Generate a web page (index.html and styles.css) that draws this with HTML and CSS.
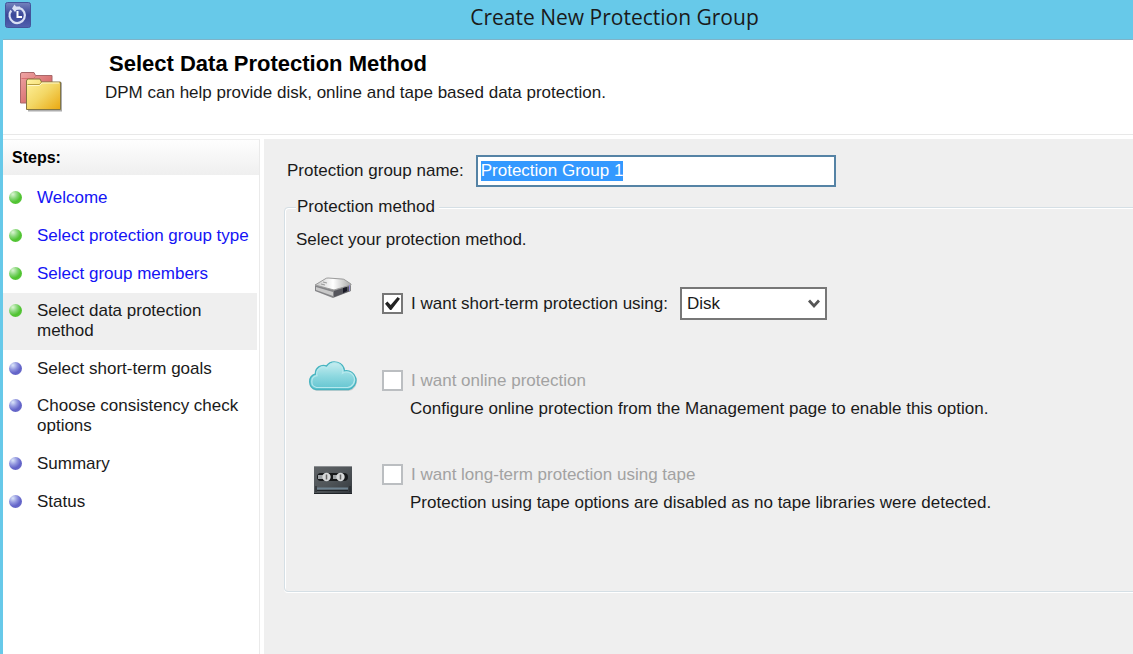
FILE: index.html
```html
<!DOCTYPE html>
<html lang="en">
<head>
  <meta charset="UTF-8">
  <meta name="viewport" content="width=device-width, initial-scale=1.0">
  <title>Create New Protection Group</title>
  <link rel="stylesheet" href="styles.css">
</head>
<body>
  <div class="titlebar">
    <svg class="app-icon" width="26" height="26" viewBox="0 0 26 26">
      <defs>
        <linearGradient id="app-bg" x1="0" y1="0" x2="0" y2="1">
          <stop offset="0" stop-color="#7583bd"></stop>
          <stop offset="0.5" stop-color="#3a4798"></stop>
          <stop offset="1" stop-color="#5262b0"></stop>
        </linearGradient>
      </defs>
      <rect x="0.5" y="0.5" width="25" height="25" rx="2" fill="url(#app-bg)" stroke="#44549b"></rect>
      <path d="M6.200 8.500a7.700 7.700 0 1 0 8-2.600" fill="none" stroke="#d9e0f5" stroke-width="2.200"></path>
      <path d="M7 6.500l2.500-4 1.500 2h4v3l-3.500.5-1.500 2z" fill="#d9e0f5"></path>
      <path d="M12.500 9v6H17" fill="none" stroke="#fff" stroke-width="2"></path>
    </svg>
    <div class="titlebar-text">Create New Protection Group</div>
  </div>

  <div class="window">
    <div class="header">
      <svg class="header-icon" width="44" height="42" viewBox="0 0 44 42">
        <defs>
          <linearGradient id="folder-red" x1="0" y1="0" x2="1" y2="1">
            <stop offset="0" stop-color="#f0a5a5"></stop>
            <stop offset="1" stop-color="#c9504f"></stop>
          </linearGradient>
          <linearGradient id="folder-yellow" x1="0" y1="0" x2="1" y2="1">
            <stop offset="0" stop-color="#fff3a0"></stop>
            <stop offset="0.5" stop-color="#f3d765"></stop>
            <stop offset="1" stop-color="#eaa810"></stop>
          </linearGradient>
        </defs>
        <path d="M1.500 32V3q0-1.500 1.500-1.500h12l1.500 3H33v27.500z" fill="url(#folder-red)" stroke="#a8686a"></path>
        <path d="M2.500 7.500h12l2-2" fill="none" stroke="#d96e70"></path>
        <path d="M9 39.500h33v-28" fill="none" stroke="#777" stroke-width="2" opacity="0.600"></path>
        <path d="M7.500 38.500V10q0-2 2-2h11.500l1.500 3h19v27.500z" fill="url(#folder-yellow)" stroke="#857640"></path>
        <path d="M8.500 14.500h12l2.500-2.500h17" fill="none" stroke="#fff8c8"></path>
        <path d="M8.500 13.500h12l2-2.500" fill="none" stroke="#b79d40"></path>
      </svg>
      <div class="header-text">
        <h1>Select Data Protection Method</h1>
        <p>DPM can help provide disk, online and tape based data protection.</p>
      </div>
    </div>

    <div class="content">
      <nav class="sidebar">
        <h2>Steps:</h2>
        <ul class="steps">
          <li class="step done"><a href="#">Welcome</a></li>
          <li class="step done"><a href="#">Select protection group type</a></li>
          <li class="step done"><a href="#">Select group members</a></li>
          <li class="step done long active"><span>Select data protection method</span></li>
          <li class="step"><span>Select short-term goals</span></li>
          <li class="step long"><span>Choose consistency check options</span></li>
          <li class="step"><span>Summary</span></li>
          <li class="step"><span>Status</span></li>
        </ul>
      </nav>

      <form class="main">
        <div class="name-row">
          <label for="group-name">Protection group name:</label>
          <input type="text" id="group-name" value="Protection Group 1">
        </div>

        <fieldset class="methods">
          <legend>Protection method</legend>
          <p class="intro">Select your protection method.</p>

          <div class="method disk">
            <svg class="method-icon" width="38" height="22" viewBox="0 0 38 22">
              <defs>
                <linearGradient id="disk-top" x1="0" y1="0" x2="1" y2="0">
                  <stop offset="0" stop-color="#c4c4c4"></stop>
                  <stop offset="0.5" stop-color="#ffffff"></stop>
                  <stop offset="1" stop-color="#aaaaaa"></stop>
                </linearGradient>
              </defs>
              <path d="M1 8v6l18 7 18-7V7L20 12z" fill="#858588"></path>
              <path d="M1 8l10-6q1-1 3-1l14 1q2 0 3 1l6 4v1L20 13z" fill="url(#disk-top)" stroke="#9b9b9b"></path>
              <path d="M2 10l17 5v4L2 13z" fill="#c9c9c9"></path>
              <path d="M20 14l16-5v5l-16 6z" fill="#55555c"></path>
              <path d="M29 11l4-1v4l-4 2z" fill="#191925"></path>
              <path d="M35.500 8v6" stroke="#8f88cf"></path>
              <path d="M9 5l4 1M7 7l4 1" stroke="#999" fill="none"></path>
            </svg>
            <div class="method-body">
              <label class="check"><input type="checkbox" checked> I want short-term protection using:</label>
              <div class="select-box">
                <select aria-label="Short-term protection media">
                  <option>Disk</option>
                </select>
                <svg class="arrow" width="12" height="10" viewBox="0 0 12 10">
                  <path d="M1 1.500l5 5.500 5-5.500" fill="none" stroke="#555" stroke-width="2.800"></path>
                </svg>
              </div>
            </div>
          </div>

          <div class="method online">
            <svg class="method-icon" width="52" height="32" viewBox="0 0 52 32">
              <defs>
                <linearGradient id="cloud" x1="0" y1="0" x2="0" y2="1">
                  <stop offset="0" stop-color="#c9eef1"></stop>
                  <stop offset="0.5" stop-color="#8fd9e0"></stop>
                  <stop offset="1" stop-color="#62c4d0"></stop>
                </linearGradient>
              </defs>
              <path d="M10 31a9 8.500 0 0 1-1-16.500a8 8 0 0 1 11-8a10.500 10 0 0 1 18 5a9.700 9.700 0 1 1 4 19.500z" fill="#999" opacity="0.350"></path>
              <path d="M9 29.500a8 8 0 0 1-.5-15.500a8 8 0 0 1 11-8a10 10 0 0 1 18 5a9.400 9.400 0 1 1 4 18.500z" fill="url(#cloud)" stroke="#48b4c0" stroke-width="1.400"></path>
              <path d="M9.500 27.500a6 6 0 0 1 .5-11.800a6.500 6.500 0 0 1 10-7.200a8 8 0 0 1 15.500 4.700a7.800 7.800 0 1 1 5 14.300z" fill="none" stroke="#b5e8ed" stroke-width="1.200"></path>
            </svg>
            <div class="method-body">
              <label class="check"><input type="checkbox" disabled> I want online protection</label>
              <p>Configure online protection from the Management page to enable this option.</p>
            </div>
          </div>

          <div class="method tape">
            <svg class="method-icon" width="38" height="28" viewBox="0 0 38 28">
              <defs>
                <linearGradient id="tape" x1="0" y1="0" x2="1" y2="1">
                  <stop offset="0" stop-color="#606467"></stop>
                  <stop offset="0.5" stop-color="#505559"></stop>
                  <stop offset="1" stop-color="#33383d"></stop>
                </linearGradient>
              </defs>
              <rect width="38" height="28" fill="url(#tape)"></rect>
              <path d="M0 .5h38" stroke="#8c8f92"></path>
              <rect x="3" y="7" width="31" height="8" rx="4" fill="#17191b"></rect>
              <path d="M4 9h5v4H4zM19 9h4v4h-4z" fill="#9da1a4"></path>
              <circle cx="12.500" cy="11" r="4.200" fill="#d7d9da"></circle>
              <circle cx="26.500" cy="11" r="4.200" fill="#d7d9da"></circle>
              <path d="M12.500 8.500v5M26.500 8.500v5" stroke="#666" stroke-width="1.500"></path>
              <path d="M3 22.500h31" stroke="#6e8290" stroke-width="2"></path>
              <path d="M3 24.500h31M0 27.500h38M2 20v6M36 20v6" stroke="#202428"></path>
            </svg>
            <div class="method-body">
              <label class="check"><input type="checkbox" disabled> I want long-term protection using tape</label>
              <p>Protection using tape options are disabled as no tape libraries were detected.</p>
            </div>
          </div>
        </fieldset>
      </form>
    </div>
  </div>

  <script>
    // preselect the default name so it can be typed over
    const groupName = document.getElementById('group-name');
    groupName.focus();
    groupName.select();
  </script>
</body>
</html>
```
FILE: styles.css
```css
* {
  box-sizing: border-box;
  margin: 0;
  padding: 0;
}

body {
  display: flex;
  flex-direction: column;
  height: 100vh;
  overflow: hidden;
  background-color: #67c9e9;
  color: #1a1a1a;
  font-family: "Liberation Sans", Arial, sans-serif;
  font-size: 17px;
  line-height: 20px;
}

.titlebar {
  display: flex;
  align-items: flex-start;
  height: 39px;
  padding: 2px 5px;
}

.titlebar-text {
  flex: 1;
  padding-right: 32px;
  padding-left: 102px;
  font-family: "Open Sans", "Noto Sans", sans-serif;
  font-size: 21px;
  line-height: 30px;
  text-align: center;
}

.window {
  flex: 1;
  display: flex;
  flex-direction: column;
  margin-left: 3px;
  border-top: 1px solid #7fb3c8;
  background-color: #fff;
}

.header {
  display: flex;
  gap: 42px;
  padding: 11px 16px 21px;
  border-bottom: 1px solid #e8e8e8;
}

.header-icon {
  margin-top: 20px;
}

.header h1,
.sidebar h2 {
  color: #000;
}

.header h1 {
  padding-left: 4px;
  font-size: 22px;
  line-height: 26px;
}

.header p {
  padding-top: 6px;
}

.content {
  flex: 1;
  display: flex;
  gap: 4px;
  padding-top: 4px;
}

.sidebar {
  width: 257px;
  flex-shrink: 0;
  border-top: 1px solid #eee;
  border-right: 1px solid #eaeaea;
}

.sidebar h2 {
  padding: 8px 9px 7px;
  background: linear-gradient(#fefefe, #efefef);
  font-size: 16px;
  line-height: 20px;
}

.steps {
  padding-top: 4px;
  list-style: none;
}

.step {
  display: flex;
  gap: 15px;
  margin-right: 2px;
  padding: 9px 6px;
}

.step::before {
  content: "";
  flex-shrink: 0;
  width: 13px;
  height: 13px;
  margin-top: 3px;
  border-radius: 50%;
  background: radial-gradient(circle at 30% 25%, #dbe6fa 0, #8e92dd 35%, #6263c8 60%, #6e6ec8 100%);
}

.step.done::before {
  background: radial-gradient(circle at 30% 25%, #dcf5d4 0, #83d573 35%, #4fc32f 60%, #62c84a 100%);
}

.step.long {
  padding-top: 8px;
}

.step.active {
  background-color: #efefef;
}

.step a {
  color: #1414f5;
  text-decoration: none;
}

.main {
  flex: 1;
  min-width: 0;
  overflow: hidden;
  padding: 16px 0 0 20px;
  background-color: #efefef;
}

.name-row {
  display: flex;
  align-items: center;
  gap: 12px;
  padding-left: 3px;
}

.name-row input {
  width: 360px;
  height: 32px;
  padding: 0 3px;
  border: 2px solid #5583a5;
  outline: none;
  background-color: #fff;
  color: #1a1a1a;
  font: inherit;
}

.name-row input::selection {
  background-color: #3399ff;
  color: #fff;
}

/* the right edge of the group runs out of the window */
.methods {
  min-height: 395px;
  margin: 10px -12px 0 0;
  padding: 0 11px;
  border: 1px solid #d5dfe5;
  border-radius: 4px;
  box-shadow: inset 1px 1px #fff, 0 1px #fff;
}

.methods legend {
  padding: 0 4px 0 1px;
  background-color: #efefef;
}

.intro {
  padding-top: 13px;
}

.method {
  display: grid;
  grid-template-columns: 74px 1fr;
  gap: 12px;
}

.method-icon {
  justify-self: center;
}

.disk {
  padding-top: 27px;
}

.disk .method-body {
  display: flex;
  align-items: center;
  gap: 12px;
  padding-top: 10px;
}

.online {
  padding-top: 40px;
}

.online .method-body {
  padding-top: 10px;
}

.tape {
  padding-top: 45px;
}

.tape .method-icon {
  margin-top: 2px;
}

.method-body p {
  padding: 8px 0 0 28px;
}

.check {
  display: flex;
  align-items: center;
  gap: 8px;
}

.check input {
  appearance: none;
  width: 21px;
  height: 21px;
  border: 2px solid #777;
  background-color: #fff;
}

.check input:checked::before {
  content: "";
  display: block;
  width: 15px;
  height: 13px;
  margin: 2px 1px;
  background-color: #222;
  clip-path: polygon(0 52%, 16% 34%, 38% 62%, 84% 0, 100% 14%, 42% 100%, 34% 100%);
}

.check input:disabled {
  border-color: #bbbec1;
}

.check:has(input:disabled) {
  color: #a2a2a2;
}

.select-box {
  position: relative;
}

.select-box select {
  appearance: none;
  width: 147px;
  height: 33px;
  padding: 0 5px;
  border: 2px solid #777;
  border-radius: 0;
  background-color: #fff;
  color: #1a1a1a;
  font: inherit;
}

.arrow {
  position: absolute;
  top: 12px;
  right: 7px;
  pointer-events: none;
}
```
